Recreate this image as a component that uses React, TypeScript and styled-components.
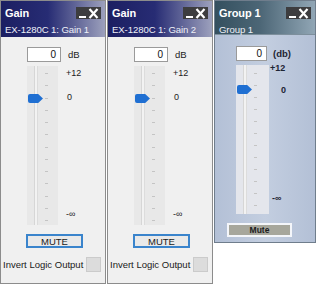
import React from 'react';
import styled, { createGlobalStyle, css } from 'styled-components';

const GlobalStyle = createGlobalStyle`
  body {
    margin: 0;
    background: #ffffff;
    font-family: "Liberation Sans", Arial, sans-serif;
  }
`;

type Variant = 'gain' | 'group';

const Row = styled.div`
  display: flex;
  align-items: flex-start;
`;

const Panel = styled.div<{ $variant: Variant }>`
  box-sizing: border-box;
  display: flex;
  flex-direction: column;
  border: 1px solid #8c8c8c;
  ${(p) =>
    p.$variant === 'gain'
      ? css`
          width: 106px;
          height: 284px;
          background: #f0f0f0;
          & + & {
            margin-left: 1px;
          }
        `
      : css`
          width: 102px;
          height: 243px;
          margin-left: 4px;
          border-color: #6f7d8c;
          background: linear-gradient(to right, #b3c0d6, #c3cee0 50%, #b3c0d6);
        `}
`;

const Header = styled.div<{ $variant: Variant }>`
  box-sizing: border-box;
  color: #ffffff;
  padding: 3px 4px 0 4px;
  ${(p) =>
    p.$variant === 'gain'
      ? css`
          height: 36px;
          background: linear-gradient(to right, #1c1f62, #272c74 45%, #9da1bd);
        `
      : css`
          height: 34px;
          background: linear-gradient(to right, #34505f, #4c6676 45%, #91a6b5);
          border-bottom: 1px solid #7d8f9c;
        `}
`;

const TitleRow = styled.div`
  display: flex;
  align-items: center;
  justify-content: space-between;
  height: 17px;
`;

const Title = styled.span`
  font-weight: bold;
  font-size: 11px;
  letter-spacing: -0.1px;
`;

const WinButtons = styled.div`
  display: flex;
  align-items: flex-end;
  justify-content: center;
  gap: 1px;
  width: 25px;
  height: 12px;
  background: #3d3d3f;
`;

const Subtitle = styled.div`
  font-size: 9.6px;
  margin-top: 3px;
  color: #eef0f8;
  white-space: nowrap;
  letter-spacing: -0.1px;
`;

const Body = styled.div<{ $variant: Variant }>`
  display: flex;
  flex-direction: column;
  padding-left: ${(p) => (p.$variant === 'gain' ? '26px' : '21px')};
  padding-top: ${(p) => (p.$variant === 'gain' ? '10px' : '11px')};
`;

const InputRow = styled.div`
  display: flex;
  align-items: center;
`;

const Value = styled.div<{ $w: number }>`
  box-sizing: border-box;
  width: ${(p) => p.$w}px;
  height: 15px;
  background: #ffffff;
  border: 1px solid #9a9a9a;
  font-size: 10px;
  line-height: 13px;
  text-align: right;
  padding-right: 4px;
  color: #111;
`;

const Unit = styled.span<{ $bold?: boolean }>`
  margin-left: 7px;
  font-size: 9.5px;
  color: #222;
  font-weight: ${(p) => (p.$bold ? 'bold' : 'normal')};
  ${(p) => p.$bold && 'color: #1d2433; margin-left: 6px;'}
`;

const SliderRow = styled.div`
  display: flex;
  margin-top: 4px;
`;

const Track = styled.div<{ $w: number; $h: number; $variant: Variant }>`
  position: relative;
  box-sizing: border-box;
  width: ${(p) => p.$w}px;
  height: ${(p) => p.$h}px;
  display: flex;
  padding-left: 7px;
  background: ${(p) => (p.$variant === 'gain' ? '#e8e8e8' : '#e4e6ec')};
`;

const Groove = styled.div`
  width: 2px;
  height: 100%;
  border-left: 1px solid #d6d6d6;
  border-right: 1px solid #dcdcdc;
  background: #f2f2f2;
`;

const Ticks = styled.div<{ $top: number; $bottom: number }>`
  display: flex;
  flex-direction: column;
  justify-content: space-between;
  margin-left: 7px;
  padding-top: ${(p) => p.$top}px;
  padding-bottom: ${(p) => p.$bottom}px;
`;

const Tick = styled.span`
  display: block;
  width: 3px;
  height: 1px;
  background: #c4c4c4;
`;

const Handle = styled.div<{ $top: number }>`
  position: absolute;
  left: 1px;
  top: ${(p) => p.$top}px;
  width: 15px;
  height: 9px;
  background: #1f6fd2;
  border-radius: 2px 0 0 2px;
  clip-path: polygon(0 0, 68% 0, 100% 50%, 68% 100%, 0 100%);
`;

const Scale = styled.div<{ $variant: Variant }>`
  display: flex;
  flex-direction: column;
  font-size: 9px;
  color: #222;
  margin-left: ${(p) => (p.$variant === 'gain' ? '8px' : '1px')};
  ${(p) => p.$variant === 'group' && 'font-weight: bold; color: #1d2433;'}
`;

const Mark = styled.span<{ $mt: number; $ml?: number }>`
  display: block;
  height: 10px;
  line-height: 10px;
  margin-top: ${(p) => p.$mt}px;
  margin-left: ${(p) => p.$ml || 0}px;
`;

const MuteButton = styled.div<{ $variant: Variant }>`
  box-sizing: border-box;
  display: flex;
  align-items: center;
  justify-content: center;
  ${(p) =>
    p.$variant === 'gain'
      ? css`
          width: 57px;
          height: 14px;
          margin-top: 9px;
          margin-left: -1px;
          border: 2px solid #3a84cc;
          background: #e9e9e9;
          font-size: 9.5px;
          color: #1a1a1a;
        `
      : css`
          width: 65px;
          height: 14px;
          margin-top: 9px;
          margin-left: -9px;
          border: 2px solid #f4f6fa;
          background: #a7a79c;
          font-size: 8.5px;
          font-weight: bold;
          color: #1c1c1c;
        `}
`;

const InvertRow = styled.div`
  display: flex;
  align-items: center;
  margin-top: 9px;
  margin-left: -24px;
  font-size: 9.5px;
  color: #1a1a1a;
`;

const CheckBox = styled.span`
  box-sizing: border-box;
  width: 15px;
  height: 15px;
  margin-left: 3px;
  background: #dcdcdc;
  border: 1px solid #cbcbcb;
`;

function WindowIcons() {
  return (
    <WinButtons>
      <svg width="8" height="11" viewBox="0 0 8 11">
        <rect x="0" y="8" width="7" height="2" fill="#ffffff" />
      </svg>
      <svg width="11" height="11" viewBox="0 0 11 11">
        <path d="M1.5 1 L9.5 10 M9.5 1 L1.5 10" stroke="#ffffff" strokeWidth="2.2" />
      </svg>
    </WinButtons>
  );
}

function GainPanel({ channel }: { channel: string }) {
  return (
    <Panel $variant="gain">
      <Header $variant="gain">
        <TitleRow>
          <Title>Gain</Title>
          <WindowIcons />
        </TitleRow>
        <Subtitle>EX-1280C 1: {channel}</Subtitle>
      </Header>
      <Body $variant="gain">
        <InputRow>
          <Value $w={34}>0</Value>
          <Unit>dB</Unit>
        </InputRow>
        <SliderRow>
          <Track $w={31} $h={159} $variant="gain">
            <Groove />
            <Ticks $top={7} $bottom={4}>
              {Array.from({ length: 13 }).map((_, i) => (
                <Tick key={i} />
              ))}
            </Ticks>
            <Handle $top={28} />
          </Track>
          <Scale $variant="gain">
            <Mark $mt={2}>+12</Mark>
            <Mark $mt={14} $ml={1}>0</Mark>
            <Mark $mt={107} $ml={0}>-∞</Mark>
          </Scale>
        </SliderRow>
        <MuteButton $variant="gain">MUTE</MuteButton>
        <InvertRow>
          Invert Logic Output
          <CheckBox />
        </InvertRow>
      </Body>
    </Panel>
  );
}

function GroupPanel() {
  return (
    <Panel $variant="group">
      <Header $variant="group">
        <TitleRow>
          <Title>Group 1</Title>
          <WindowIcons />
        </TitleRow>
        <Subtitle>Group 1</Subtitle>
      </Header>
      <Body $variant="group">
        <InputRow>
          <Value $w={31}>0</Value>
          <Unit $bold>(db)</Unit>
        </InputRow>
        <SliderRow>
          <Track $w={33} $h={149} $variant="group">
            <Groove />
            <Ticks $top={8} $bottom={8}>
              {Array.from({ length: 12 }).map((_, i) => (
                <Tick key={i} />
              ))}
            </Ticks>
            <Handle $top={20} />
          </Track>
          <Scale $variant="group">
            <Mark $mt={-2}>+12</Mark>
            <Mark $mt={12} $ml={11}>0</Mark>
            <Mark $mt={98} $ml={2}>-∞</Mark>
          </Scale>
        </SliderRow>
        <MuteButton $variant="group">Mute</MuteButton>
      </Body>
    </Panel>
  );
}

export default function App() {
  return (
    <>
      <GlobalStyle />
      <Row>
        <GainPanel channel="Gain 1" />
        <GainPanel channel="Gain 2" />
        <GroupPanel />
      </Row>
    </>
  );
}
